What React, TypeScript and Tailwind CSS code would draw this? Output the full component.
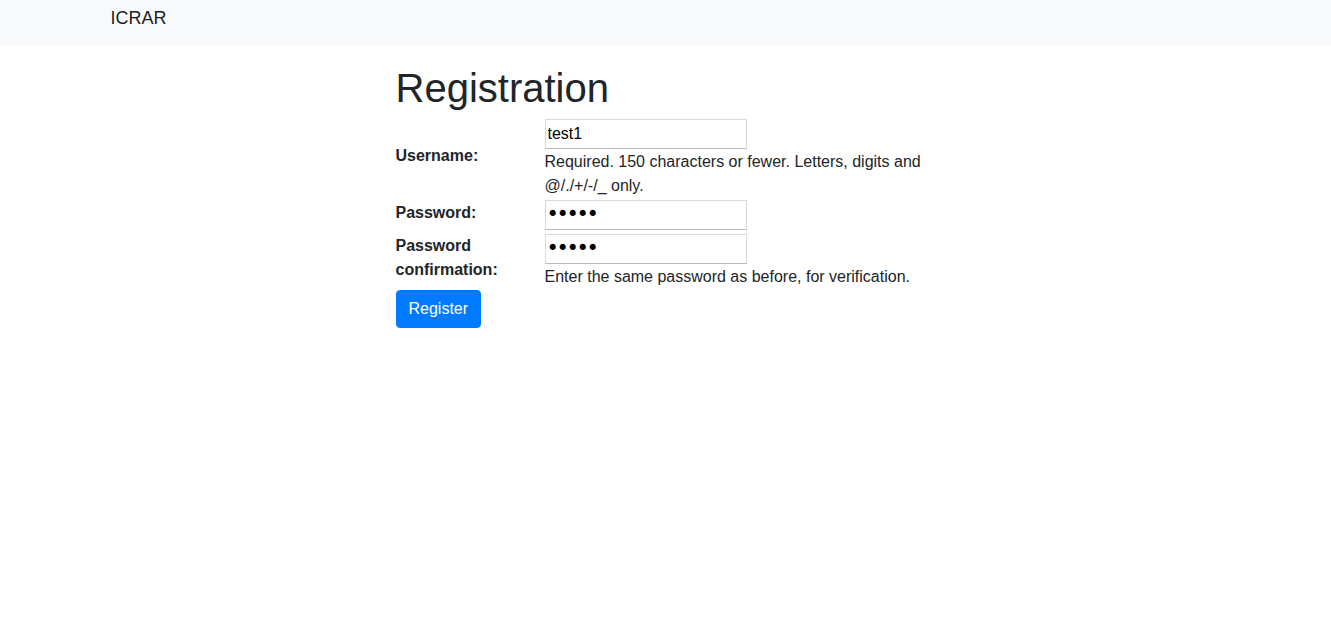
import { useState } from 'react';

function Field({
    label,
    type,
    value,
    help,
    className = '',
    labelClass = 'mb-[5px]',
}: {
    label: string;
    type: string;
    value: string;
    help?: string;
    className?: string;
    labelClass?: string;
}) {
    const isPassword = type === 'password';
    return (
        <div className={`flex items-center py-[1px] ${className}`}>
            <div className={`w-[149px] shrink-0 pr-2 font-bold leading-6 ${labelClass}`}>{label}</div>
            <div className="flex-1 flex flex-col">
                <input
                    type={type}
                    defaultValue={value}
                    style={isPassword ? { fontFamily: '"DejaVu Sans", sans-serif' } : undefined}
                    className={
                        isPassword
                            ? 'w-[202px] h-[30px] border border-[#d9d9d9] border-b-[#b8b8b8] px-[1px] text-[21px] tracking-[-2.4px] text-black outline-none'
                            : 'w-[202px] h-[30px] border border-[#d9d9d9] border-b-[#b8b8b8] px-[2px] text-[16px] text-black outline-none'
                    }
                />
                {help && <div className="leading-6 mt-[1px]">{help}</div>}
            </div>
        </div>
    );
}

function App() {
    const [submitted, setSubmitted] = useState(false);
    return (
        <div className="min-h-screen bg-white text-[#212529] text-[16px]" style={{ fontFamily: '"Liberation Sans", Arial, sans-serif' }}>
            <nav className="bg-[#f8f9fa] h-[45px]">
                <div className="max-w-[1140px] mx-auto px-[15px]">
                    <a href="#" className="block text-[18px] leading-[36px] text-black/90">ICRAR</a>
                </div>
            </nav>
            <div className="max-w-[1140px] mx-auto px-[15px]">
                <div className="flex -mx-[15px]">
                    <div className="w-1/4 px-[15px]" />
                    <div className="w-1/2 px-[15px]">
                        <h1 className="text-[40px] font-medium leading-[48px] mt-[19px] mb-[6px]">Registration</h1>
                        <form
                            onSubmit={e => {
                                e.preventDefault();
                                setSubmitted(true);
                            }}
                        >
                            <div className="flex flex-col">
                                <Field label="Username:" type="text" value="test1" help="Required. 150 characters or fewer. Letters, digits and @/./+/-/_ only." />
                                <Field label="Password:" type="password" value="12345" />
                                <Field
                                    label="Password confirmation:"
                                    type="password"
                                    value="12345"
                                    help="Enter the same password as before, for verification."
                                    className="mt-[2px]"
                                    labelClass="self-start"
                                />
                            </div>
                            <button
                                type="submit"
                                className="bg-[#007bff] text-white rounded-[4px] px-3 py-[6px] leading-6 border border-[#007bff]"
                            >
                                Register
                            </button>
                            {submitted && <span className="sr-only">submitted</span>}
                        </form>
                    </div>
                </div>
            </div>
        </div>
    );
}

export default App;
